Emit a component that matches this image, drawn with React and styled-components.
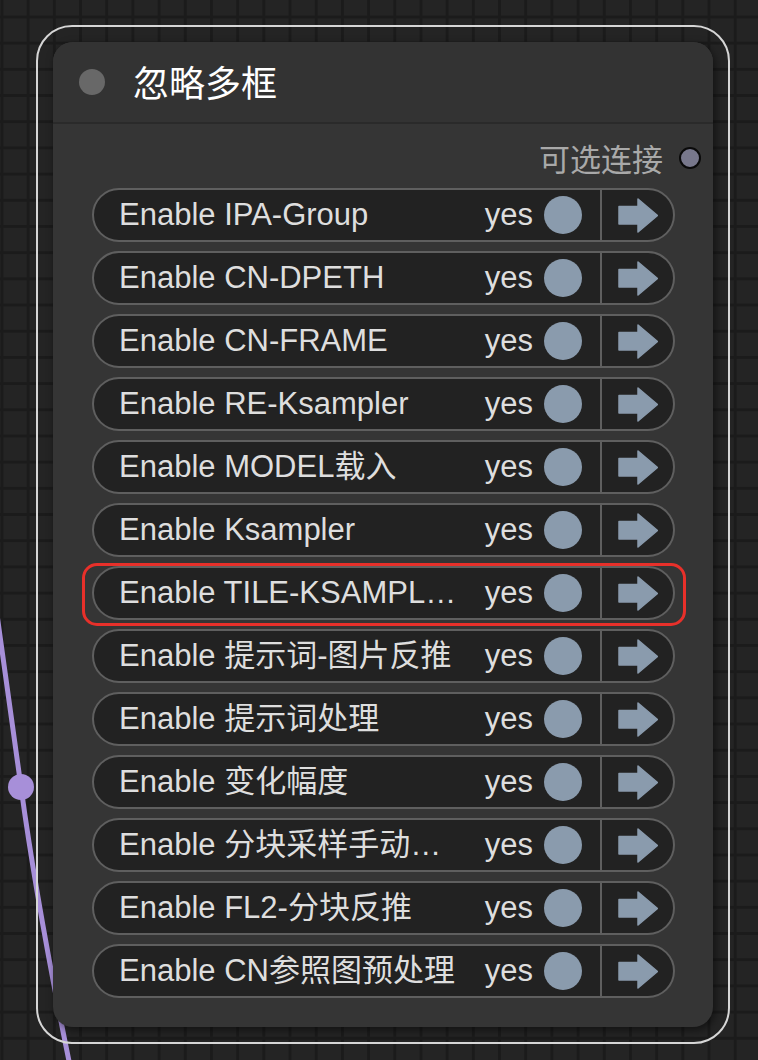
import React from "react";
import styled, { createGlobalStyle } from "styled-components";

const Global = createGlobalStyle`
  html, body { margin: 0; padding: 0; }
  body {
    background-color: #242424;
    background-image:
      linear-gradient(to right, #1b1b1b 0, #1b1b1b 3px, transparent 3px),
      linear-gradient(to bottom, #1b1b1b 0, #1b1b1b 3px, transparent 3px);
    background-size: 26.2px 26.2px;
    background-position: 0.5px 15.5px;
    font-family: "Liberation Sans", "Noto Sans CJK SC", sans-serif;
    overflow: hidden;
  }
`;

const Canvas = styled.div`
  position: relative;
  width: 758px;
  height: 1060px;
  box-sizing: border-box;
  padding: 25px 0 0 36px;
  overflow: hidden;
`;

const LinkLayer = styled.svg`
  position: absolute;
  left: 0;
  top: 0;
  z-index: 0;
`;

const Selection = styled.div`
  position: relative;
  z-index: 1;
  width: 694px;
  box-sizing: border-box;
  border: 2px solid #d6d6d6;
  border-radius: 36px;
  padding: 15px;
`;

const Node = styled.div`
  background: #353535;
  border-radius: 20px;
  box-shadow: 2px 3px 8px rgba(0, 0, 0, 0.5);
  overflow: hidden;
`;

const TitleBar = styled.div`
  height: 80px;
  display: flex;
  align-items: center;
  gap: 28px;
  padding-left: 26px;
  background: #333333;
  border-bottom: 2px solid #2a2a2a;
`;

const TitleDot = styled.span`
  width: 26px;
  height: 26px;
  border-radius: 50%;
  background: #686868;
  flex: none;
`;

const Title = styled.h1`
  margin: 0;
  font-family: "Noto Sans CJK SC", "Liberation Sans", sans-serif;
  font-size: 36px;
  font-weight: 400;
  color: #ffffff;
  line-height: 1.2;
`;

const Body = styled.div`
  display: flex;
  flex-direction: column;
  padding: 14px 38px 29px 39px;
`;

const OutputSlot = styled.div`
  height: 40px;
  display: flex;
  align-items: center;
  justify-content: flex-end;
  gap: 16px;
  margin-right: -26px;
  margin-bottom: 10px;
`;

const OutputLabel = styled.span`
  font-family: "Noto Sans CJK SC", sans-serif;
  font-size: 31px;
  color: #a9a9a9;
  line-height: 1.2;
`;

const OutputDot = styled.span`
  width: 18px;
  height: 18px;
  border-radius: 50%;
  background: #78788c;
  border: 2px solid #0a0a0a;
  flex: none;
`;

const Rows = styled.div`
  display: flex;
  flex-direction: column;
  gap: 9px;
`;

const Row = styled.div`
  position: relative;
  height: 54px;
  box-sizing: border-box;
  display: flex;
  align-items: center;
  background: #222222;
  border: 2px solid #5f5f5f;
  border-radius: 27px;
`;

const Label = styled.span`
  flex: 1;
  min-width: 0;
  padding: 0 16px 0 25px;
  font-size: 31px;
  color: #dedede;
  white-space: nowrap;
  overflow: hidden;
  text-overflow: ellipsis;
  line-height: 1.35;
`;

const Value = styled.span`
  font-size: 31px;
  color: #dedede;
  line-height: 1.35;
  flex: none;
`;

const Knob = styled.span`
  width: 38px;
  height: 38px;
  border-radius: 50%;
  background: #8a9bad;
  margin: 0 18px 0 11px;
  flex: none;
`;

const Divider = styled.span`
  width: 2px;
  align-self: stretch;
  background: #5f5f5f;
  flex: none;
`;

const ArrowBox = styled.span`
  width: 71px;
  display: flex;
  align-items: center;
  justify-content: center;
  flex: none;
`;

const Highlight = styled.span`
  position: absolute;
  top: -5px;
  bottom: -8px;
  left: -12px;
  right: -13px;
  border: 3.5px solid #e8302a;
  border-radius: 15px;
  pointer-events: none;
`;

const Arrow = () => (
  <svg width="40" height="35" viewBox="0 0 40 35">
    <path
      d="M1 8.5 H20 V1 L39.5 17.5 L20 34 V26 H1 Z"
      fill="#8a9bad"
      stroke="#8a9bad"
      strokeWidth="1.5"
      strokeLinejoin="round"
    />
  </svg>
);

const items = [
  "Enable IPA-Group",
  "Enable CN-DPETH",
  "Enable CN-FRAME",
  "Enable RE-Ksampler",
  "Enable MODEL载入",
  "Enable Ksampler",
  "Enable TILE-KSAMPL…",
  "Enable 提示词-图片反推",
  "Enable 提示词处理",
  "Enable 变化幅度",
  "Enable 分块采样手动…",
  "Enable FL2-分块反推",
  "Enable CN参照图预处理",
];

export default function App() {
  return (
    <>
      <Global />
      <Canvas>
        <LinkLayer width="758" height="1060" viewBox="0 0 758 1060">
          <path
            d="M -5 600 L 21 787 Q 37 905 70 1066"
            fill="none"
            stroke="#a78fd9"
            strokeWidth="5"
          />
          <circle cx="21" cy="787" r="13" fill="#a78fd9" />
        </LinkLayer>
        <Selection>
          <Node>
            <TitleBar>
              <TitleDot />
              <Title>忽略多框</Title>
            </TitleBar>
            <Body>
              <OutputSlot>
                <OutputLabel>可选连接</OutputLabel>
                <OutputDot />
              </OutputSlot>
              <Rows>
                {items.map((text, i) => (
                  <Row key={i}>
                    <Label>{text}</Label>
                    <Value>yes</Value>
                    <Knob />
                    <Divider />
                    <ArrowBox>
                      <Arrow />
                    </ArrowBox>
                    {i === 6 && <Highlight />}
                  </Row>
                ))}
              </Rows>
            </Body>
          </Node>
        </Selection>
      </Canvas>
    </>
  );
}
